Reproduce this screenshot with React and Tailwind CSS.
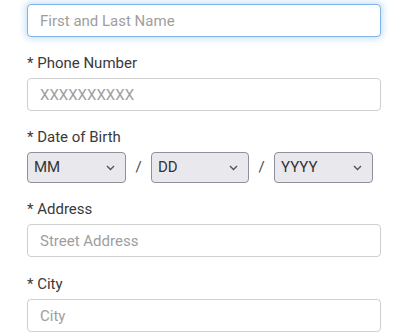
import React from "react";

const font = { fontFamily: "Roboto, 'Liberation Sans', sans-serif" };

function Label({ children }) {
  return (
    <label className="block text-[15px] leading-[20px] text-[#3a3a3a] mb-[5px]">
      {children}
    </label>
  );
}

function TextInput({ placeholder, focused }) {
  return (
    <input
      type="text"
      placeholder={placeholder}
      autoFocus={focused}
      className={
        "block w-full h-[33px] rounded-[4px] bg-white px-[12px] text-[15px] text-[#333] placeholder:text-[#9e9e9e] outline-none border " +
        (focused
          ? "border-[#7fb4e6] shadow-[0_0_6px_2px_rgba(102,170,235,0.35)]"
          : "border-[#cfcfcf]")
      }
    />
  );
}

function Chevron() {
  return (
    <svg
      width="9"
      height="6"
      viewBox="0 0 9 6"
      className="pointer-events-none absolute right-[11px] top-[13px]"
    >
      <path d="M1 1l3.5 3.5L8 1" fill="none" stroke="#555" strokeWidth="1.4" />
    </svg>
  );
}

function Select({ label, width }) {
  return (
    <div className={"relative " + width}>
      <select
        defaultValue=""
        className="block w-full h-[31px] appearance-none rounded-[4px] border border-[#8f8f9d] bg-[#e9e9ed] pl-[6px] text-[15px] text-[#333] outline-none"
      >
        <option value="">{label}</option>
      </select>
      <Chevron />
    </div>
  );
}

export default function App() {
  return (
    <div className="w-[400px] h-[333px] overflow-hidden bg-white" style={font}>
      <div className="px-[27px] pt-[4px] w-[408px]">
        <div className="mb-[16px]">
          <TextInput placeholder="First and Last Name" focused />
        </div>

        <div className="mb-[16px]">
          <Label>* Phone Number</Label>
          <TextInput placeholder="XXXXXXXXXX" />
        </div>

        <div className="mb-[16px]">
          <Label>* Date of Birth</Label>
          <div className="flex items-center">
            <Select label="MM" width="w-[99px]" />
            <span className="w-[25px] text-center text-[15px] text-[#444]">/</span>
            <Select label="DD" width="w-[98px]" />
            <span className="w-[25px] text-center text-[15px] text-[#444]">/</span>
            <Select label="YYYY" width="w-[99px]" />
          </div>
        </div>

        <div className="mb-[17px]">
          <Label>* Address</Label>
          <TextInput placeholder="Street Address" />
        </div>

        <div>
          <Label>* City</Label>
          <TextInput placeholder="City" />
        </div>
      </div>
    </div>
  );
}
